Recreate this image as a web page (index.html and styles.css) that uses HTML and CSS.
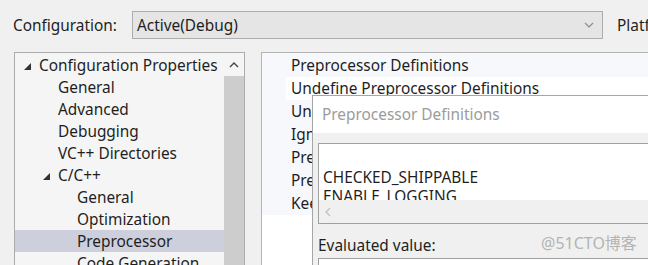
FILE: index.html
```html
<!DOCTYPE html>
<html lang="en">
<head>
  <meta charset="UTF-8" />
  <title>Property Pages</title>
  <link rel="stylesheet" href="styles.css">
</head>
<body>

  <div class="topbar">
    <div class="label">Configuration:</div>
    <div class="combo">
      <span>Active(Debug)</span>
      <svg class="chev" width="10" height="6" viewBox="0 0 10 6"><path d="M1 1 L5 5 L9 1" fill="none" stroke="#8a8a8a" stroke-width="1.2"/></svg>
    </div>
    <div class="label platform">Platform:</div>
  </div>

  <div class="main">
    <div class="tree-panel">
      <ul class="tree">
        <li class="lvl0"><span class="tri"></span>Configuration Properties</li>
        <li class="lvl1">General</li>
        <li class="lvl1">Advanced</li>
        <li class="lvl1">Debugging</li>
        <li class="lvl1">VC++ Directories</li>
        <li class="lvl1 open"><span class="tri"></span>C/C++</li>
        <li class="lvl2">General</li>
        <li class="lvl2">Optimization</li>
        <li class="lvl2 selected">Preprocessor</li>
        <li class="lvl2">Code Generation</li>
      </ul>
      <div class="vscroll">
        <div class="vscroll-up">
          <svg width="10" height="6" viewBox="0 0 10 6"><path d="M1 5 L5 1 L9 5" fill="none" stroke="#444" stroke-width="1.4"/></svg>
        </div>
        <div class="vscroll-thumb"></div>
      </div>
    </div>

    <div class="props-panel">
      <div class="props">
        <div class="row">Preprocessor Definitions</div>
        <div class="row white">Undefine Preprocessor Definitions</div>
        <div class="row">Undefine All Preprocessor Definitions</div>
        <div class="row">Ignore Standard Include Paths</div>
        <div class="row">Preprocess to a File</div>
        <div class="row">Preprocess Suppress Line Numbers</div>
        <div class="row">Keep Comments</div>
      </div>
    </div>
  </div>

  <div class="dialog">
    <div class="dialog-title">Preprocessor Definitions</div>
    <div class="dialog-body">
      <div class="editbox">
        <div class="edit-text">
          <div>CHECKED_SHIPPABLE</div>
          <div>ENABLE_LOGGING</div>
        </div>
        <div class="hscroll">
          <svg width="6" height="10" viewBox="0 0 6 10"><path d="M5 1 L1 5 L5 9" fill="none" stroke="#c0c0c0" stroke-width="1.3"/></svg>
        </div>
      </div>
      <div class="eval-label">Evaluated value:</div>
      <div class="evalbox"></div>
    </div>
  </div>

  <div class="watermark">@51CTO博客</div>

</body>
</html>
```

FILE: styles.css
```css
* { margin: 0; padding: 0; box-sizing: border-box; }
body {
  font-family: 'Noto Sans', 'Noto Sans CJK SC', sans-serif;
  font-size: 15.4px;
  color: #1e1e1e;
  background: #f0f0f0;
  width: 648px;
  height: 265px;
  overflow: hidden;
  position: relative;
}
.topbar {
  display: flex;
  align-items: center;
  padding: 11px 0 0 13px;
  height: 39px;
  white-space: nowrap;
}
.label { width: 119px; flex-shrink: 0; }
.combo {
  flex-shrink: 0;
  width: 471px;
  height: 28px;
  border: 1px solid #adadad;
  background: #e5e5e5;
  display: flex;
  align-items: center;
  justify-content: space-between;
  padding: 0 8px 0 4px;
}
.platform { margin-left: 14px; }

.main {
  display: flex;
  margin-top: 13px;
  height: 220px;
}
.tree-panel {
  flex-shrink: 0;
  margin-left: 14px;
  width: 231px;
  border: 1px solid #acacac;
  border-bottom: none;
  background: #f5f5f5;
  display: flex;
}
.tree {
  list-style: none;
  width: 209px;
  white-space: nowrap;
  padding-top: 1px;
}
.tree li {
  height: 22px;
  line-height: 22px;
  padding-top: 1px;
  display: flex;
  align-items: center;
}
.lvl0 { padding-left: 9px; }
.lvl1 { padding-left: 43px; }
.lvl1.open { padding-left: 28px; }
.lvl2 { padding-left: 62px; }
.tree li.selected { background: #cdd0dc; }
.tri {
  width: 0;
  height: 0;
  border-left: 7px solid transparent;
  border-bottom: 7px solid #333;
  margin-right: 8px;
  margin-top: 1px;
}
.vscroll {
  width: 20px;
  display: flex;
  flex-direction: column;
}
.vscroll-up {
  height: 23px;
  display: flex;
  align-items: center;
  justify-content: center;
}
.vscroll-thumb {
  flex: 1;
  background: #cdcdcd;
}

.props-panel {
  margin-left: 16px;
  flex: 1;
  border-left: 1px solid #b4b4b4;
  border-top: 1px solid #b4b4b4;
  background: #fff;
}
.props { background: #f6f8fc; padding-top: 1px; }
.props .row {
  height: 23px;
  line-height: 22px;
  padding-top: 1px;
  padding-left: 29px;
  white-space: nowrap;
}
.props .row.white { background: linear-gradient(to right, #f6f8fc 24px, #fff 24px); }

.dialog {
  position: absolute;
  left: 312px;
  top: 95px;
  width: 400px;
  height: 200px;
  border: 1px solid #a6a6a6;
  background: #f0f0f0;
}
.dialog-title {
  height: 37px;
  background: #fff;
  color: #9b9b9b;
  line-height: 38px;
  padding-left: 9px;
  white-space: nowrap;
}
.dialog-body { padding: 10px 0 0 5px; }
.editbox {
  border: 1px solid #a0a0a0;
  background: #fff;
  height: 81px;
}
.edit-text {
  height: 56px;
  overflow: hidden;
  padding: 24px 0 0 4px;
  line-height: 19px;
}
.hscroll {
  height: 23px;
  background: #f0f0f0;
  display: flex;
  align-items: center;
  padding-left: 6px;
}
.eval-label {
  margin-top: 11px;
  line-height: 22px;
}
.evalbox {
  margin-top: 1px;
  height: 30px;
  border: 1px solid #a0a0a0;
  background: #fff;
}
.watermark {
  position: absolute;
  left: 541px;
  top: 232px;
  color: #b4b4b4;
  font-size: 16px;
  line-height: 22px;
}
```
